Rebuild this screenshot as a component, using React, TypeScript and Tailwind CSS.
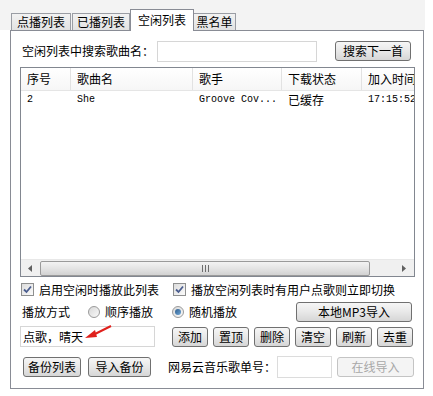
import React from 'react';

const cjk = '"Noto Sans CJK SC", "Liberation Sans", sans-serif';

function Btn({ label, w, disabled }: { label: string; w: string; disabled?: boolean }) {
  return (
    <div
      className={`${w} h-[20px] flex items-center justify-center rounded-[3px] border text-[12px] leading-none ${
        disabled
          ? 'border-[#c4c4c4] bg-[#f4f4f4] text-[#a8a8a8]'
          : 'border-[#707070] bg-gradient-to-b from-[#f6f6f6] via-[#e8e8e8] to-[#d6d6d6] text-black'
      }`}
    >
      {label}
    </div>
  );
}

function Check() {
  return (
    <div className="w-[13px] h-[13px] border border-[#8e8f8f] bg-gradient-to-br from-[#dcdcdc] to-[#fbfbfb] flex items-center justify-center">
      <svg width="9" height="9" viewBox="0 0 9 9">
        <path d="M1 4.5 L3.5 7 L8 1.5" fill="none" stroke="#4a5d8f" strokeWidth="1.8" />
      </svg>
    </div>
  );
}

function Radio({ on }: { on?: boolean }) {
  return (
    <div className="w-[12px] h-[12px] rounded-full border border-[#9a9a9a] bg-gradient-to-br from-[#d8d8d8] to-[#fafafa] flex items-center justify-center">
      {on && <div className="w-[6px] h-[6px] rounded-full bg-gradient-to-br from-[#2f5f8f] to-[#6fa6d6]" />}
    </div>
  );
}

const cols = [
  { w: 'w-[50px]', h: '序号' },
  { w: 'w-[122px]', h: '歌曲名' },
  { w: 'w-[89px]', h: '歌手' },
  { w: 'w-[80px]', h: '下载状态' },
  { w: 'w-[60px]', h: '加入时间' },
];

const row = ['2', 'She', 'Groove Cov...', '已缓存', '17:15:52'];

export default function App() {
  return (
    <div className="w-[433px] h-[396px] bg-white text-black overflow-hidden" style={{ fontFamily: cjk }}>
      {/* tab strip */}
      <div className="w-[425px] h-[30px] bg-[#f3f3f3] pl-[11px] pt-[9px] flex items-end">
        <div className="w-[60px] h-[17px] border border-b-0 border-[#9a9da4] bg-gradient-to-b from-[#f2f2f2] to-[#e2e2e2] text-[12px] leading-[16px] text-center">点播列表</div>
        <div className="w-[58px] h-[17px] ml-px border border-b-0 border-[#9a9da4] bg-gradient-to-b from-[#f2f2f2] to-[#e2e2e2] text-[12px] leading-[16px] text-center">已播列表</div>
        <div className="relative z-10 w-[64px] h-[22px] -mb-px border border-b-0 border-[#898c95] bg-white text-[12px] leading-[20px] text-center">空闲列表</div>
        <div className="w-[42px] h-[17px] border border-b-0 border-l-0 border-[#9a9da4] bg-gradient-to-b from-[#f2f2f2] to-[#e2e2e2] text-[12px] leading-[16px] text-center">黑名单</div>
      </div>

      {/* panel */}
      <div className="ml-[10px] w-[414px] h-[359px] border border-[#898c95] bg-white">
        {/* search */}
        <div className="mt-[9px] pl-[11px] flex items-center h-[22px]">
          <span className="w-[135px] text-[12px]">空闲列表中搜索歌曲名：</span>
          <div className="w-[160px] h-[21px] border border-[#d6d6d6] bg-white" />
          <div className="ml-[18px]">
            <Btn label="搜索下一首" w="w-[76px]" />
          </div>
        </div>

        {/* list */}
        <div className="mt-[5px] ml-[9px] w-[395px] h-[210px] border border-[#828790] bg-white flex flex-col">
          <div className="h-[23px] flex border-b border-[#e5e5e5] bg-gradient-to-b from-white to-[#f6f6f6] overflow-hidden">
            {cols.map((c) => (
              <div key={c.h} className={`${c.w} shrink-0 pl-[6px] border-r border-[#e2e2e2] text-[12px] leading-[22px] whitespace-nowrap`}>
                {c.h}
              </div>
            ))}
          </div>
          <div className="h-[18px] flex overflow-hidden">
            {row.map((v, i) => (
              <div
                key={i}
                className={`${cols[i].w} shrink-0 pl-[6px] leading-[18px] whitespace-nowrap ${i === 3 ? 'text-[12px]' : 'text-[10px]'}`}
                style={i === 3 ? undefined : { fontFamily: '"Liberation Mono", monospace' }}
              >
                {v}
              </div>
            ))}
          </div>
          <div className="flex-1" />
          {/* horizontal scrollbar */}
          <div className="h-[17px] flex items-center bg-[#f0f0f0] border-t border-[#e8e8e8]">
            <div className="w-[17px] flex justify-center">
              <svg width="4" height="7" viewBox="0 0 4 7"><path d="M4 0 L0 3.5 L4 7 Z" fill="#606060" /></svg>
            </div>
            <div className="ml-[2px] w-[330px] h-[15px] rounded-[2px] border border-[#9a9a9a] bg-gradient-to-b from-[#f3f3f3] via-[#e4e4e4] to-[#d2d2d2] flex items-center justify-center">
              <div className="flex gap-[2px]">
                <div className="w-px h-[7px] bg-[#6d6d6d]" />
                <div className="w-px h-[7px] bg-[#6d6d6d]" />
                <div className="w-px h-[7px] bg-[#6d6d6d]" />
              </div>
            </div>
            <div className="flex-1 flex justify-end pr-[8px]">
              <svg width="4" height="7" viewBox="0 0 4 7"><path d="M0 0 L4 3.5 L0 7 Z" fill="#606060" /></svg>
            </div>
          </div>
        </div>

        {/* checkboxes */}
        <div className="mt-[4px] pl-[10px] h-[17px] flex items-center text-[12px]">
          <Check />
          <span className="ml-[5px]">启用空闲时播放此列表</span>
          <div className="ml-[14px]"><Check /></div>
          <span className="ml-[5px]">播放空闲列表时有用户点歌则立即切换</span>
        </div>

        {/* play mode */}
        <div className="mt-[3px] pl-[11px] h-[21px] flex items-center text-[12px]">
          <span>播放方式</span>
          <div className="ml-[18px]"><Radio /></div>
          <span className="ml-[5px]">顺序播放</span>
          <div className="ml-[19px]"><Radio on /></div>
          <span className="ml-[5px]">随机播放</span>
          <div className="ml-[59px]">
            <Btn label="本地MP3导入" w="w-[116px]" />
          </div>
        </div>

        {/* input + buttons */}
        <div className="mt-[4px] pl-[9px] h-[21px] flex items-center">
          <div className="relative w-[135px] h-[21px] border border-[#d6d6d6] text-[12px] leading-[19px] pl-[2px]">
            点歌，晴天
            <svg className="absolute left-[62px] top-[-2px]" width="30" height="16" viewBox="0 0 30 16">
              <path d="M28 1 L10 10" stroke="#e0201c" strokeWidth="2" fill="none" />
              <path d="M2 13 L12 5 L14 12 Z" fill="#e0201c" />
            </svg>
          </div>
          <div className="ml-[17px] flex gap-[5px]">
            {['添加', '置顶', '删除', '清空', '刷新', '去重'].map((t) => (
              <Btn key={t} label={t} w="w-[36px]" />
            ))}
          </div>
        </div>

        {/* bottom */}
        <div className="mt-[9px] pl-[12px] h-[22px] flex items-center text-[12px]">
          <Btn label="备份列表" w="w-[58px]" />
          <div className="ml-[7px]"><Btn label="导入备份" w="w-[63px]" /></div>
          <span className="ml-[17px]">网易云音乐歌单号：</span>
          <div className="ml-[1px] w-[55px] h-[22px] border border-[#dcdcdc]" />
          <div className="ml-[5px]"><Btn label="在线导入" w="w-[77px]" disabled /></div>
        </div>
      </div>
    </div>
  );
}
